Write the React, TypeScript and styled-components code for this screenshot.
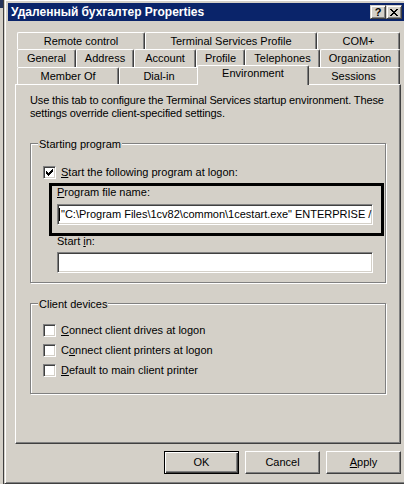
import React from "react";
import styled, { createGlobalStyle, css } from "styled-components";

const FACE = "#d4d0c8";
const SHADOW = "#808080";
const DARK = "#404040";
const HILITE = "#ffffff";
const CAPTION = "#0a246a";
const UI_FONT = `"Liberation Sans", Arial, sans-serif`;

const Global = createGlobalStyle`
  html, body { margin: 0; padding: 0; background: ${FACE}; overflow: hidden; }
  body { font-family: ${UI_FONT}; font-size: 11px; color: #000; }
  #root { width: 404px; height: 484px; overflow: hidden; }
`;

const Screen = styled.div`
  display: flex;
  width: 404px;
  height: 484px;
  overflow: hidden;
  background: ${FACE};
`;

const BackEdge = styled.div`
  flex: none;
  width: 4px;
  height: 100%;
  box-sizing: border-box;
  border-right: 1px solid ${DARK};
`;

const BackCaption = styled.div`
  width: 3px;
  height: 8px;
  background: #26345a;
`;

const Window = styled.div`
  flex: none;
  width: 404px;
  height: 484px;
  box-sizing: border-box;
  padding: 3px 4px 0 3px;
  border-left: 1px solid ${FACE};
  border-bottom: 1px solid ${DARK};
  box-shadow: inset 1px 1px 0 ${HILITE}, inset 0 -1px 0 ${SHADOW};
  display: flex;
  flex-direction: column;
`;

const TitleBar = styled.div`
  flex: none;
  height: 18px;
  display: flex;
  align-items: center;
  padding-left: 3px;
  background: ${CAPTION};
  color: #fff;
  font-weight: bold;
  font-size: 12px;
  line-height: 18px;
  white-space: nowrap;
`;

const TitleText = styled.span`
  flex: 1;
`;

const CaptionButtons = styled.div`
  display: flex;
  margin-right: 2px;
`;

const CaptionButton = styled.div`
  width: 16px;
  height: 14px;
  box-sizing: border-box;
  background: ${FACE};
  border: 1px solid;
  border-color: ${FACE} ${DARK} ${DARK} ${FACE};
  box-shadow: inset 1px 1px 0 ${HILITE}, inset -1px -1px 0 ${SHADOW};
  display: flex;
  align-items: center;
  justify-content: center;
  color: #000;
  font-size: 11px;
  font-weight: bold;
  line-height: 12px;
`;

const TabArea = styled.div`
  margin: 11px 0 0 7px;
  width: 386px;
`;

const TabRow = styled.div<{ $h: number }>`
  display: flex;
  align-items: flex-start;
  height: ${(p) => p.$h}px;
  padding: 0 1px 0 2px;
`;

const Tab = styled.div<{ $w: number; $active?: boolean }>`
  flex: none;
  box-sizing: border-box;
  width: ${(p) => (p.$active ? p.$w + 4 : p.$w)}px;
  height: 100%;
  border-left: 1px solid ${HILITE};
  border-top: 1px solid ${HILITE};
  border-right: 1px solid ${DARK};
  border-top-left-radius: 2px;
  border-top-right-radius: 2px;
  box-shadow: inset -1px 0 0 ${SHADOW};
  background: ${FACE};
  text-align: center;
  padding-top: 2px;
  line-height: 13px;
  white-space: nowrap;
  ${(p) =>
    p.$active &&
    css`
      position: relative;
      z-index: 1;
      margin: -2px -2px 0;
      height: calc(100% + 3px);
      padding-top: 1px;
    `}
`;

const Panel = styled.div`
  box-sizing: border-box;
  height: 360px;
  border: 1px solid;
  border-color: ${HILITE} ${DARK} ${DARK} ${HILITE};
  box-shadow: inset -1px -1px 0 ${SHADOW};
  padding: 9px 0 0 14px;
  display: flex;
  flex-direction: column;
`;

const Description = styled.p`
  margin: 0;
  line-height: 13px;
  letter-spacing: -0.13px;
  white-space: nowrap;
`;

const Group = styled.div<{ $h: number; $top: number; $pad: number }>`
  position: relative;
  box-sizing: border-box;
  width: 356px;
  height: ${(p) => p.$h}px;
  margin-top: ${(p) => p.$top}px;
  padding: ${(p) => p.$pad}px 0 0 12px;
  border: 1px solid ${SHADOW};
  box-shadow: inset 1px 1px 0 ${HILITE}, 1px 1px 0 ${HILITE};
  display: flex;
  flex-direction: column;
`;

const GroupCaption = styled.span`
  position: absolute;
  top: -6px;
  left: 7px;
  padding: 0 1px;
  background: ${FACE};
  line-height: 13px;
  white-space: nowrap;
`;

const CheckRow = styled.div<{ $gap?: number }>`
  display: flex;
  align-items: center;
  gap: 5px;
  height: 13px;
  margin-top: ${(p) => p.$gap ?? 0}px;
  line-height: 13px;
  white-space: nowrap;
`;

const CheckBox = styled.div`
  flex: none;
  width: 13px;
  height: 13px;
  box-sizing: border-box;
  background: #fff;
  border: 1px solid;
  border-color: ${SHADOW} ${HILITE} ${HILITE} ${SHADOW};
  box-shadow: inset 1px 1px 0 ${DARK}, inset -1px -1px 0 ${FACE};
  display: flex;
  align-items: center;
  justify-content: center;
`;

const Key = styled.span`
  text-decoration: underline;
  text-underline-offset: 1px;
`;

const Field = styled.div`
  display: flex;
  flex-direction: column;
  margin-left: 14px;
`;

const FieldLabel = styled.div<{ $top: number }>`
  line-height: 13px;
  margin-top: ${(p) => p.$top}px;
  white-space: nowrap;
`;

const Edit = styled.div<{ $top: number }>`
  box-sizing: border-box;
  width: 316px;
  height: 21px;
  margin-top: ${(p) => p.$top}px;
  background: #fff;
  border: 1px solid;
  border-color: ${SHADOW} ${HILITE} ${HILITE} ${SHADOW};
  box-shadow: inset 1px 1px 0 ${DARK}, inset -1px -1px 0 ${FACE};
  padding: 3px 2px 0 1px;
  overflow: hidden;
  white-space: nowrap;
  line-height: 13px;
  display: flex;
  align-items: flex-start;
`;

const Caret = styled.span`
  flex: none;
  width: 1px;
  height: 13px;
  margin-right: 1px;
  background: #000;
`;

const Annotation = styled.div`
  position: absolute;
  left: 18px;
  top: 39px;
  width: 335px;
  height: 53px;
  box-sizing: border-box;
  border: 3px solid #000;
  pointer-events: none;
`;

const ButtonRow = styled.div`
  display: flex;
  justify-content: flex-end;
  gap: 6px;
  margin-top: 7px;
  padding-right: 3px;
`;

const Button = styled.button<{ $default?: boolean }>`
  width: 75px;
  height: 23px;
  box-sizing: border-box;
  padding: 0;
  font-family: ${UI_FONT};
  font-size: 11px;
  line-height: 13px;
  color: #000;
  background: ${FACE};
  border: 1px solid;
  border-color: ${HILITE} ${DARK} ${DARK} ${HILITE};
  box-shadow: inset -1px -1px 0 ${SHADOW};
  border-radius: 0;
  ${(p) =>
    p.$default &&
    css`
      border-color: #000;
      box-shadow: inset 1px 1px 0 ${HILITE}, inset -1px -1px 0 ${DARK},
        inset -2px -2px 0 ${SHADOW};
    `}
`;

const CheckMark = () => (
  <svg width="7" height="7" viewBox="0 0 7 7" shapeRendering="crispEdges">
    <path
      fill="#000"
      d="M6 0h1v1h-1z M5 1h2v1h-2z M0 2h1v1h-1z M4 2h3v1h-3z M0 3h2v1h-2z M3 3h3v1h-3z M0 4h5v1h-5z M1 5h3v1h-3z M2 6h1v1h-1z"
    />
  </svg>
);

const CloseGlyph = () => (
  <svg width="8" height="7" viewBox="0 0 8 7" shapeRendering="crispEdges">
    <path
      fill="#000"
      d="M0 0h2v1h-2z M6 0h2v1h-2z M1 1h2v1h-2z M5 1h2v1h-2z M2 2h4v1h-4z M3 3h2v1h-2z M2 4h4v1h-4z M1 5h2v1h-2z M5 5h2v1h-2z M0 6h2v1h-2z M6 6h2v1h-2z"
    />
  </svg>
);

type TabDef = { label: string; w: number; active?: boolean };

const rows: { h: number; tabs: TabDef[] }[] = [
  {
    h: 17,
    tabs: [
      { label: "Remote control", w: 128 },
      { label: "Terminal Services Profile", w: 172 },
      { label: "COM+", w: 83 },
    ],
  },
  {
    h: 18,
    tabs: [
      { label: "General", w: 59 },
      { label: "Address", w: 58 },
      { label: "Account", w: 62 },
      { label: "Profile", w: 49 },
      { label: "Telephones", w: 75 },
      { label: "Organization", w: 80 },
    ],
  },
  {
    h: 17,
    tabs: [
      { label: "Member Of", w: 102 },
      { label: "Dial-in", w: 80 },
      { label: "Environment", w: 108, active: true },
      { label: "Sessions", w: 93 },
    ],
  },
];

export default function App() {
  return (
    <>
      <Global />
      <Screen>
        <BackEdge>
          <BackCaption />
        </BackEdge>
        <Window>
          <TitleBar>
            <TitleText>Удаленный бухгалтер Properties</TitleText>
            <CaptionButtons>
              <CaptionButton>?</CaptionButton>
              <CaptionButton>
                <CloseGlyph />
              </CaptionButton>
            </CaptionButtons>
          </TitleBar>

          <TabArea>
            {rows.map((row, i) => (
              <TabRow key={i} $h={row.h}>
                {row.tabs.map((t) => (
                  <Tab key={t.label} $w={t.w} $active={t.active}>
                    {t.label}
                  </Tab>
                ))}
              </TabRow>
            ))}
            <Panel>
              <Description>
                Use this tab to configure the Terminal Services startup environment. These
                <br />
                settings override client-specified settings.
              </Description>

              <Group $h={140} $top={23} $pad={22}>
                <GroupCaption>Starting program</GroupCaption>
                <CheckRow>
                  <CheckBox>
                    <CheckMark />
                  </CheckBox>
                  <span>
                    <Key>S</Key>tart the following program at logon:
                  </span>
                </CheckRow>
                <Field>
                  <FieldLabel $top={7}>
                    <Key>P</Key>rogram file name:
                  </FieldLabel>
                  <Edit $top={5}>
                    <Caret />
                    "C:\Program Files\1cv82\common\1cestart.exe" ENTERPRISE /
                  </Edit>
                  <FieldLabel $top={10}>
                    Start <Key>i</Key>n:
                  </FieldLabel>
                  <Edit $top={4} />
                </Field>
                <Annotation />
              </Group>

              <Group $h={91} $top={20} $pad={20}>
                <GroupCaption>Client devices</GroupCaption>
                <CheckRow>
                  <CheckBox />
                  <span>
                    <Key>C</Key>onnect client drives at logon
                  </span>
                </CheckRow>
                <CheckRow $gap={7}>
                  <CheckBox />
                  <span>
                    C<Key>o</Key>nnect client printers at logon
                  </span>
                </CheckRow>
                <CheckRow $gap={7}>
                  <CheckBox />
                  <span>
                    <Key>D</Key>efault to main client printer
                  </span>
                </CheckRow>
              </Group>
            </Panel>
          </TabArea>

          <ButtonRow>
            <Button $default>OK</Button>
            <Button>Cancel</Button>
            <Button>
              <Key>A</Key>pply
            </Button>
          </ButtonRow>
        </Window>
      </Screen>
    </>
  );
}
